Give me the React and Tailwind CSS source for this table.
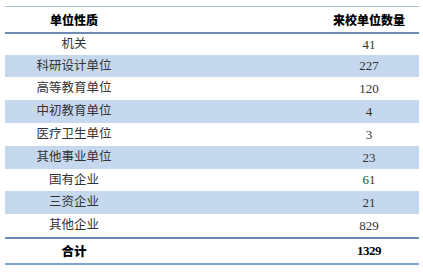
const rows = [
  { name: '机关', count: '41', h: 'h-[21px]' },
  { name: '科研设计单位', count: '227', h: 'h-[22px]', blue: true },
  { name: '高等教育单位', count: '120', h: 'h-[23px]' },
  { name: '中初教育单位', count: '4', h: 'h-[23px]', blue: true },
  { name: '医疗卫生单位', count: '3', h: 'h-[23px]' },
  { name: '其他事业单位', count: '23', h: 'h-[23px]', blue: true },
  { name: '国有企业', count: '61', h: 'h-[22px]' },
  { name: '三资企业', count: '21', h: 'h-[23px]', blue: true },
  { name: '其他企业', count: '829', h: 'h-[23px]' },
];

export default function App() {
  return (
    <div className="w-[423px] h-[273px] bg-white pt-[6px] pl-[5px] pr-[4px] font-['Liberation_Serif','Noto_Sans_CJK_SC',serif] text-[12.5px] text-[#333]">
      {/* header */}
      <div className="flex items-center h-[28px] border-t border-t-[#a9c0da] border-b-2 border-b-[#6d8bb1] text-black font-black font-['Noto_Sans_CJK_SC',sans-serif] text-[12px]">
        <div className="w-[138px] text-center">单位性质</div>
        <div className="flex-1" />
        <div className="w-[100px] text-center">来校单位数量</div>
      </div>

      {rows.map((r) => (
        <div
          key={r.name}
          className={`flex items-center ${r.h} ${r.blue ? 'bg-[#c6d8ee]' : 'bg-white'}`}
        >
          <div className="w-[138px] text-center">{r.name}</div>
          <div className="flex-1" />
          <div className="w-[100px] text-center text-[13px]">{r.count}</div>
        </div>
      ))}

      {/* total */}
      <div className="flex items-center h-[28px] border-t-2 border-t-[#6a8ab3] border-b-2 border-b-[#80a3cc] text-black font-bold">
        <div className="w-[138px] text-center font-['Noto_Sans_CJK_SC',sans-serif] font-black text-[12.5px]">合计</div>
        <div className="flex-1" />
        <div className="w-[100px] text-center text-[13px] tracking-[-0.5px]">1329</div>
      </div>
    </div>
  );
}
